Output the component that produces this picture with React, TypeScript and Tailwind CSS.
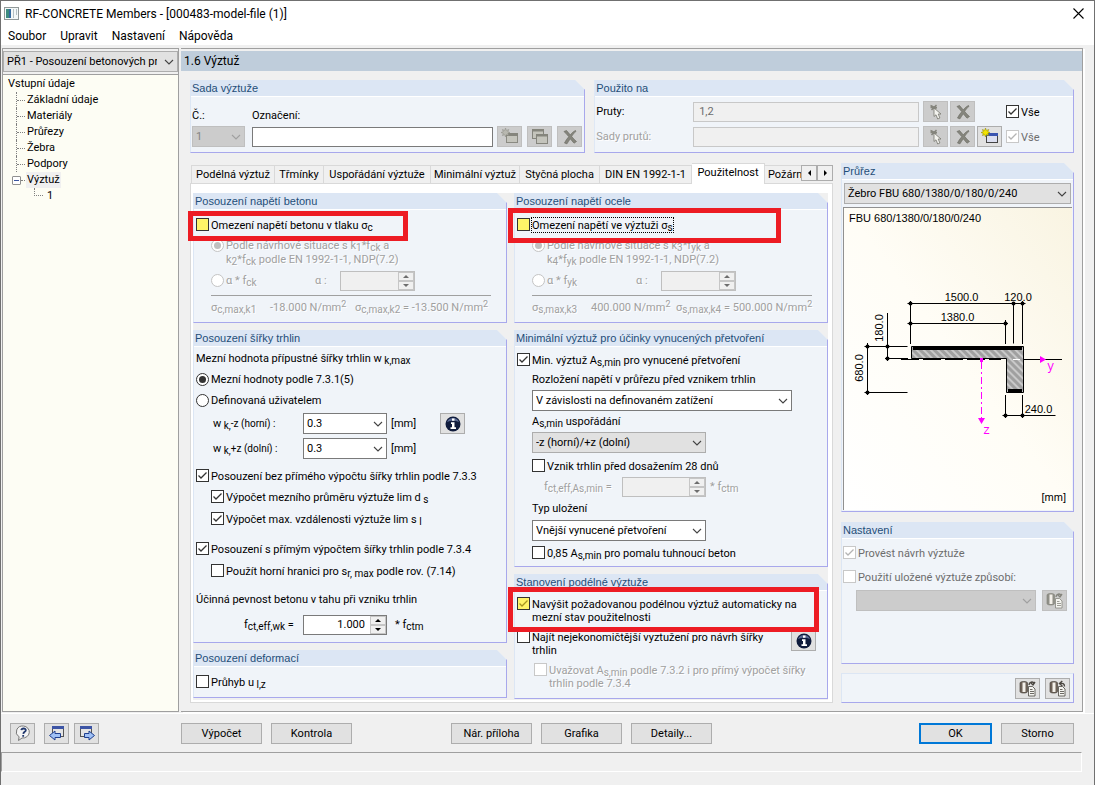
import { useId, type ReactNode } from 'react';
import clsx from 'clsx';

const treeItems = ['Základní údaje', 'Materiály', 'Průřezy', 'Žebra', 'Podpory'];

const tabs = [
  { label: 'Podélná výztuž', width: 'w-[84px]' },
  { label: 'Třmínky', width: 'w-[49px]' },
  { label: 'Uspořádání výztuže', width: 'w-[107px]' },
  { label: 'Minimální výztuž', width: 'w-[89px]' },
  { label: 'Styčná plocha', width: 'w-[80px]' },
  { label: 'DIN EN 1992-1-1', width: 'w-[92px]' },
  { label: 'Použitelnost', width: 'w-[73px]', active: true },
];

const DISABLED_TEXT = 'text-[#a0a0a0] [text-shadow:1px_1px_0_#fff]';

function Sub({ children }: { children: ReactNode }) {
  return <span className="relative top-[2px] text-[10px]">{children}</span>;
}

function Sup({ children }: { children: ReactNode }) {
  return <span className="relative -top-[4px] text-[9px]">{children}</span>;
}

interface GroupProps {
  title?: string;
  className?: string;
  bodyClass?: string;
  children?: ReactNode;
}

/* Group box with the cut top right corner */
function Group({ title, className, bodyClass, children }: GroupProps) {
  return (
    <section
      className={clsx(
        'flex flex-col border-r border-b border-l border-r-[#a8a8ec] border-b-[#a8a8ec] border-l-[#dce6f4] bg-[#f0f4f9]',
        title && '[clip-path:polygon(0_0,calc(100%-10px)_0,100%_10px,100%_100%,0_100%)]',
        !title && 'border-t border-t-[#dce6f4]',
        className,
      )}
    >
      {title && (
        <h2 className="h-[17px] border-b border-white bg-[#dce6f4] pl-px font-['Liberation_Sans',sans-serif] text-[11px] leading-4 whitespace-nowrap text-[#1f4e79]">
          {title}
        </h2>
      )}
      <div className={clsx('flex flex-1 flex-col', bodyClass)}>{children}</div>
    </section>
  );
}

interface CheckProps {
  children: ReactNode;
  checked?: boolean;
  disabled?: boolean;
  flat?: boolean;
  marked?: boolean;
  focused?: boolean;
  className?: string;
}

function Check({ children, checked, disabled, flat, marked, focused, className }: CheckProps) {
  return (
    <label className={clsx('flex items-start gap-0.5', className)}>
      <span className="relative h-[13px] w-[13px] shrink-0">
        <input
          type="checkbox"
          defaultChecked={checked}
          disabled={disabled}
          className={clsx(
            'peer block h-[13px] w-[13px] appearance-none border',
            disabled ? 'border-[#c8c8c8]' : 'border-[#333]',
            marked ? 'bg-[#fff468]' : 'bg-white',
          )}
        />
        <svg
          viewBox="0 0 13 13"
          className="pointer-events-none absolute inset-0 hidden h-[13px] w-[13px] peer-checked:block"
          fill="none"
          stroke={disabled ? '#b4b4b4' : marked ? '#a8961e' : '#333'}
          strokeWidth="1.3"
        >
          <path d="M2.5 6.5 5 9l5.5-5.5" />
        </svg>
      </span>
      <span
        className={clsx(
          'pt-px leading-[13px]',
          disabled && (flat ? 'text-[#6d6d6d]' : DISABLED_TEXT),
          focused && 'outline-1 outline-dotted outline-black',
        )}
      >
        {children}
      </span>
    </label>
  );
}

interface RadioProps {
  name: string;
  children: ReactNode;
  checked?: boolean;
  disabled?: boolean;
  className?: string;
}

function Radio({ name, children, checked, disabled, className }: RadioProps) {
  return (
    <label className={clsx('flex items-start gap-0.5', className)}>
      <span className="relative h-[13px] w-[13px] shrink-0">
        <input
          type="radio"
          name={name}
          defaultChecked={checked}
          disabled={disabled}
          className={clsx(
            'peer block h-[13px] w-[13px] appearance-none rounded-full border bg-white',
            disabled ? 'border-[#c4c4c4]' : 'border-[#333]',
          )}
        />
        <span
          className={clsx(
            'pointer-events-none absolute inset-[3px] hidden rounded-full peer-checked:block',
            disabled ? 'bg-[#c0c0c0]' : 'bg-[#333]',
          )}
        />
      </span>
      <span className={clsx('leading-[14px]', disabled && DISABLED_TEXT)}>{children}</span>
    </label>
  );
}

interface ComboProps {
  label: string;
  value: string;
  id?: string;
  grey?: boolean;
  disabled?: boolean;
  className?: string;
}

function Combo({ label, value, id, grey, disabled, className }: ComboProps) {
  return (
    <span className={clsx('relative block h-[21px] shrink-0', className)}>
      <select
        id={id}
        aria-label={label}
        disabled={disabled}
        className={clsx(
          'block h-[21px] w-full appearance-none border pt-px pr-5 pl-[3px]',
          disabled
            ? 'border-[#bfbfbf] bg-[#cccccc] text-[#838383] opacity-100'
            : grey
              ? 'border-[#adadad] bg-[#e1e1e1]'
              : 'border-[#7a7a7a] bg-white',
        )}
      >
        <option>{value}</option>
      </select>
      <svg
        viewBox="0 0 10 6"
        className="pointer-events-none absolute top-[8px] right-1 h-[6px] w-[10px]"
        fill="none"
        stroke={disabled ? '#a0a0a0' : '#444'}
        strokeWidth="1.1"
      >
        <path d="M1 1l4 4 4-4" />
      </svg>
    </span>
  );
}

interface SpinnerProps {
  label: string;
  value?: string;
  disabled?: boolean;
  className?: string;
}

function Spinner({ label, value, disabled, className }: SpinnerProps) {
  return (
    <span
      className={clsx(
        'flex h-5 shrink-0 border',
        disabled ? 'border-[#bfbfbf] bg-[#f0f0f0]' : 'border-[#7a7a7a] bg-white',
        className,
      )}
    >
      <input
        type="text"
        aria-label={label}
        defaultValue={value}
        disabled={disabled}
        className="w-0 flex-1 pr-[5px] text-right"
      />
      <span className="flex w-4 flex-col">
        {['M1 4 4 1l3 3z', 'M1 1l3 3 3-3z'].map((d, i) => (
          <button
            key={d}
            type="button"
            disabled={disabled}
            aria-label={i === 0 ? `${label} +` : `${label} -`}
            className="flex h-[9px] items-center justify-center border border-[#c6c6c6] bg-[#f0f0f0]"
          >
            <svg viewBox="0 0 8 5" className="h-[5px] w-2" fill={disabled ? '#6d6d6d' : '#000'}>
              <path d={d} />
            </svg>
          </button>
        ))}
      </span>
    </span>
  );
}

function IconButton({ label, disabled, children, className }: { label: string; disabled?: boolean; children: ReactNode; className?: string }) {
  return (
    <button
      type="button"
      aria-label={label}
      disabled={disabled}
      className={clsx(
        'flex h-[21px] w-[25px] shrink-0 items-center justify-center border',
        disabled ? 'border-[#bfbfbf] bg-[#cccccc]' : 'border-[#adadad] bg-[#e1e1e1]',
        className,
      )}
    >
      {children}
    </button>
  );
}

function TextButton({ children, primary }: { children: ReactNode; primary?: boolean }) {
  return (
    <button
      type="button"
      className={clsx(
        'h-[21px] bg-[#e1e1e1] pt-0.5 text-center',
        primary ? 'border-2 border-[#0078d7]' : 'border border-[#adadad]',
      )}
    >
      {children}
    </button>
  );
}

function NewIcon({ colored }: { colored?: boolean }) {
  return (
    <svg viewBox="0 0 18 17" className="h-[17px] w-[18px]">
      <rect x="5.5" y="5.5" width="11" height="9" fill={colored ? '#dcdff0' : '#c4c4bc'} stroke={colored ? '#444' : '#8a8a82'} />
      <path d="M5 5h12v3H5z" fill={colored ? '#3b55b0' : '#85857d'} />
      <path
        d="M4.500 0l.9 2.400L7.800 1.500 6.800 3.800 9 4.500 6.800 5.400 7.700 7.600 5.400 6.700 4.500 9 3.700 6.700 1.400 7.600 2.300 5.400 0 4.500 2.300 3.700 1.400 1.500 3.700 2.400z"
        fill={colored ? '#f2e400' : '#b8b8b0'}
        stroke={colored ? '#8a8000' : '#8a8a82'}
        strokeWidth=".5"
      />
    </svg>
  );
}

function CopyIcon() {
  return (
    <svg viewBox="0 0 18 17" className="h-[17px] w-[18px]" fill="#c4c4bc" stroke="#85857d">
      <rect x="1.500" y="1.500" width="11" height="9" />
      <path d="M1.500 2.500h11" strokeWidth="2" />
      <rect x="5.500" y="6.500" width="11" height="9" />
      <path d="M5.500 7.500h11" strokeWidth="2" />
    </svg>
  );
}

function CrossIcon() {
  return (
    <svg viewBox="0 0 16 16" className="h-4 w-4" fill="#85857d" stroke="#6e6e66" strokeWidth=".7">
      <path d="M2 2.500 4.500 1.500C6 3 7 4.500 8.300 6 9.500 4.300 11 2.700 13.500 1.500l.5.800C12 4 10.700 5.700 9.700 7.500c1.300 1.700 2.800 3.500 4.800 5l-2.500 1.700C10.700 12.800 9.500 11.300 8.300 9.800 7 11.500 6 13 5 14.800L2.500 14c1-2.300 2.500-4.300 4.300-6.300C5.300 6 3.800 4.200 2 2.500z" />
    </svg>
  );
}

function PickIcon() {
  return (
    <svg viewBox="0 0 16 16" className="h-4 w-4">
      <path d="M2.500 1.500l6 3M8.500 1l-5 5M2.500 3.500h6.500" stroke="#85857d" strokeWidth="1.500" />
      <path d="M6 4v8.500l2-1.700 1.700 4.200 2.200-1-1.700-4H13z" fill="#f3f3ef" stroke="#77776f" strokeWidth=".8" />
    </svg>
  );
}

function InfoIcon() {
  return (
    <svg viewBox="0 0 16 16" className="h-4 w-4">
      <circle cx="8" cy="8" r="7.500" fill="#0f1b3c" />
      <path d="M2 6a6.500 6.500 0 0 1 12 0c-4-2-8-2-12 0z" fill="#5a6a94" />
      <path d="M7 2.500h2.500v2.200H7zM6 6.200h3.500v5H11V13H5.500v-1.800H7V8H6z" fill="#fff" />
    </svg>
  );
}

function LibraryIcon({ disabled, load }: { disabled?: boolean; load?: boolean }) {
  const dark = disabled ? '#85857d' : '#4a4640';
  return (
    <svg viewBox="0 0 18 17" className="h-[17px] w-[18px]" fill="none">
      <path d="M1 3C1 1 8.500 1 8.500 3v8.500c0 2-7.500 2-7.500 0z" fill={disabled ? '#8f8f87' : '#6e6258'} stroke={dark} strokeWidth=".7" />
      <path d="M3.500 2.500h3v9.500h-3z" fill="#f3f0ea" />
      <path
        d={load ? 'M15.500 6.500C15.500 3.500 13.500 3 11 3.500M13.300 1l-2.800 2.500L13.300 6' : 'M10 5c0-3 4-4 5-1.500M11.500 2.500 14 5l2-3'}
        stroke={dark}
        strokeWidth="1.400"
      />
      <path d="M9.500 6.500h4l2.500 2.500v7H9.500z" fill="#f4f4f0" stroke={dark} strokeWidth=".8" />
      <path d="M11 9.500h2.500M11 11.500h4M11 13.500h4" stroke={dark} strokeWidth=".8" />
    </svg>
  );
}

function PageIcon({ next }: { next?: boolean }) {
  return (
    <svg viewBox="0 0 18 17" className="h-[17px] w-[18px]">
      <rect x={next ? 2.5 : 4.5} y="1.500" width="11" height="10" fill="#e4e4e4" stroke="#555" />
      <path d={next ? 'M2 1h12v3H2z' : 'M4 1h12v3H4z'} fill="#3d55a5" />
      <path
        d={next ? 'M6.500 8.500H11V6l5.500 4.500L11 15v-2.500H6.500z' : 'M12.500 8.500H7V6l-5.500 4.500L7 15v-2.500h5.500z'}
        fill="#9fc0f5"
        stroke="#1f3f8f"
      />
    </svg>
  );
}

function HelpIcon() {
  return (
    <svg viewBox="0 0 18 17" className="h-[17px] w-[18px]" fill="none">
      <path d="M9.500 1a6.500 6 0 1 1-1.500 12L4.500 15.500l.6-3.600A6.500 6 0 0 1 9.500 1z" fill="#f4f4f4" stroke="#777" />
      <path d="M7.300 5.200c.3-2.300 4.700-2.300 4.500 0C11.700 6.800 9.500 6.800 9.300 8.800M9.200 10v1.700" stroke="#22386e" strokeWidth="1.800" />
    </svg>
  );
}

/* Dimensioned cross-section of the rib */
function SectionDrawing() {
  const dots = [
    [67.5, 96.5], [170.5, 96.5], [179.5, 96.5], [67.5, 116.5], [162.5, 116.5],
    [24.5, 139.5], [44.5, 139.5], [44.5, 151.5], [24.5, 185.5], [162.5, 208.5], [179.5, 208.5],
  ];
  return (
    <svg viewBox="1 21 229 220" className="h-[220px] w-[229px]" fontFamily="Liberation Sans, sans-serif" fontSize="11">
      <defs>
        <pattern id="hatch" width="5" height="5" patternUnits="userSpaceOnUse" patternTransform="rotate(-45)">
          <rect width="5" height="5" fill="#a0a0a0" />
          <path d="M1 0v5" stroke="#e4e4e4" strokeWidth="1.200" />
        </pattern>
      </defs>
      <path d="M68.500 139.500h112v46h-17v-34h-95z" fill="url(#hatch)" stroke="#000" />
      <path d="M70 139h109v4H70zM165 182h14v3h-14z" />
      <g stroke="#000" fill="none">
        <path d="M64.500 96.500h118M67.500 94v43M170.500 96.500v40M179.500 94v43" />
        <path d="M64.500 116.500H165M162.500 113v24" />
        <path d="M21.500 139.500h43M42 151.500h23M44.500 106v48M24.500 136v52M21.500 185.500h43" />
        <path d="M159.500 208.500h53M162.500 188v23M179.500 188v23" />
        <path d="M58 152.500h100" strokeDasharray="18 4" />
        <path d="M181 152.500h38" />
        <path d="M170 152.500h7" stroke="#fff" />
      </g>
      {dots.map(([x, y]) => (
        <circle key={`${x}-${y}`} cx={x} cy={y} r="2" />
      ))}
      <g fill="#f0f" stroke="none" className="font-['Liberation_Mono',monospace] text-[12px]">
        <path d="M197 149v7l6-3.500zM135 211h7l-3.500 6zM137 151h3v4h-3z" />
        <path d="M138.500 155v56" stroke="#f0f" strokeDasharray="7 3 2 3" />
        <text x="204" y="163">y</text>
        <text x="140" y="227">z</text>
      </g>
      <g textAnchor="middle">
        <text x="118.500" y="94">1500.0</text>
        <text x="175" y="94">120.0</text>
        <text x="114.500" y="114">1380.0</text>
        <text x="195.500" y="206">240.0</text>
        <text transform="translate(40 121) rotate(-90)">180.0</text>
        <text transform="translate(20 161) rotate(-90)">680.0</text>
      </g>
    </svg>
  );
}

function Marker({ className }: { className: string }) {
  return <div className={clsx('pointer-events-none absolute z-10 border-[5px] border-[#ed1c24]', className)} />;
}

interface StressGroupProps {
  title: string;
  check: ReactNode;
  strength: string;
  factors: [string, string];
  symbol: string;
  values: [string, string];
}

function StressGroup({ title, check, strength, factors, symbol, values }: StressGroupProps) {
  const name = useId();
  return (
    <Group title={title} className="h-[130px]" bodyClass="pl-[2px]">
      <div className="flex h-[29px] items-center">{check}</div>
      <Radio name={name} checked disabled className="ml-[15px] h-7">
        Podle návrhové situace s k<Sub>{factors[0]}</Sub>*f<Sub>{strength}</Sub> a
        <br />k<Sub>{factors[1]}</Sub>*f<Sub>{strength}</Sub> podle EN 1992-1-1, NDP(7.2)
      </Radio>
      <div className="ml-[15px] flex h-7 items-center">
        <Radio name={name} disabled className="w-[104px]">
          α * f<Sub>{strength}</Sub>
        </Radio>
        <span className={clsx('w-[25px]', DISABLED_TEXT)}>α :</span>
        <Spinner label={`α ${title}`} disabled className="w-[75px]" />
      </div>
      <hr className="mr-[15px] ml-[15px] border-[#a0a0a0]" />
      <div className={clsx('mt-0.5 ml-[15px] flex h-5 items-center whitespace-nowrap', DISABLED_TEXT)}>
        <span className="w-[59px]">
          σ<Sub>{symbol},max,k{factors[0]}</Sub>
        </span>
        <span className="w-[85px]">
          {values[0]} N/mm<Sup>2</Sup>
        </span>
        <span>
          σ<Sub>{symbol},max,k{factors[1]}</Sub> = {values[1]} N/mm<Sup>2</Sup>
        </span>
      </div>
    </Group>
  );
}

function CrackGroup() {
  return (
    <Group title="Posouzení šířky trhlin" className="h-[313px]" bodyClass="pl-[2px]">
      <p className="flex h-[23px] items-center pt-px">
        <span>
          Mezní hodnota přípustné šířky trhlin w<Sub> k,max</Sub>
        </span>
      </p>
      <Radio name="limit" checked className="h-[21px] pt-[3px]">
        Mezní hodnoty podle 7.3.1(5)
      </Radio>
      <Radio name="limit" className="h-5 pt-[3px]">
        Definovaná uživatelem
      </Radio>
      {['-z (horní)', '+z (dolní)'].map((side, i) => (
        <div key={side} className="flex h-[25px] items-center pl-[17px]">
          <span className="w-[90px]">
            w<Sub> k,</Sub>
            <span className="text-[10px]">{side} :</span>
          </span>
          <Combo label={`w k,${side}`} value="0.3" className="w-[84px]" />
          <span className="w-[53px] pl-1">[mm]</span>
          {i === 0 && (
            <IconButton label="Informace">
              <InfoIcon />
            </IconButton>
          )}
        </div>
      ))}
      <Check checked className="mt-1 h-[22px] pt-1">
        Posouzení bez přímého výpočtu šířky trhlin podle 7.3.3
      </Check>
      <Check checked className="ml-[15px] h-[21px] pt-[3px]">
        Výpočet mezního průměru výztuže lim d<Sub> s</Sub>
      </Check>
      <Check checked className="ml-[15px] h-[22px] pt-1">
        Výpočet max. vzdálenosti výztuže lim s<Sub> l</Sub>
      </Check>
      <Check checked className="mt-2 h-[22px] pt-1">
        Posouzení s přímým výpočtem šířky trhlin podle 7.3.4
      </Check>
      <Check className="ml-[15px] h-6 pt-1">
        Použít horní hranici pro s<Sub>r, max</Sub> podle rov. (7.14)
      </Check>
      <p className="h-[31px] leading-8">Účinná pevnost betonu v tahu při vzniku trhlin</p>
      <div className="flex items-center">
        <span className="w-[107px] pl-12">
          f<Sub>ct,eff,wk</Sub> =
        </span>
        <Spinner label="fct,eff,wk" value="1.000" className="w-[84px]" />
        <span className="pl-2">
          * f<Sub>ctm</Sub>
        </span>
      </div>
    </Group>
  );
}

function MinReinforcementGroup() {
  return (
    <Group title="Minimální výztuž pro účinky vynucených přetvoření" className="h-[237px]" bodyClass="pl-[2px]">
      <Check checked className="h-[25px] pt-[6px]">
        Min. výztuž A<Sub>s,min</Sub> pro vynucené přetvoření
      </Check>
      <div className="flex flex-col items-start pl-[15px]">
        <label htmlFor="stress" className="mb-[3px] leading-[15px]">
          Rozložení napětí v průřezu před vznikem trhlin
        </label>
        <Combo id="stress" label="Rozložení napětí" value="V závislosti na definovaném zatížení" className="w-[260px]" />
        <label htmlFor="layout" className="leading-[21px]">
          A<Sub>s,min</Sub> uspořádání
        </label>
        <Combo id="layout" label="As,min uspořádání" value="-z (horní)/+z (dolní)" grey className="w-[174px]" />
        <Check className="h-6 pt-1.5">Vznik trhlin před dosažením 28 dnů</Check>
        <div className="flex items-center">
          <span className={clsx('w-[90px] pl-3', DISABLED_TEXT)}>
            f<Sub>ct,eff,As,min</Sub> =
          </span>
          <Spinner label="fct,eff,As,min" disabled className="w-[84px]" />
          <span className={clsx('pl-1', DISABLED_TEXT)}>
            * f<Sub>ctm</Sub>
          </span>
        </div>
        <label htmlFor="support" className="leading-[23px]">
          Typ uložení
        </label>
        <Combo id="support" label="Typ uložení" value="Vnější vynucené přetvoření" className="w-[174px]" />
        <Check className="pt-[5px]">
          0,85 A<Sub>s,min</Sub> pro pomalu tuhnoucí beton
        </Check>
      </div>
    </Group>
  );
}

function LongitudinalGroup() {
  return (
    <Group title="Stanovení podélné výztuže" className="h-[125px]" bodyClass="gap-[6px] pt-[6px] pl-[2px]">
      <Check checked marked>
        Navýšit požadovanou podélnou výztuž automaticky na
        <br />
        mezní stav použitelnosti
      </Check>
      <div className="flex h-[27px] justify-between pr-[11px]">
        <Check>
          Najít nejekonomičtější vyztužení pro návrh šířky
          <br />
          trhlin
        </Check>
        <IconButton label="Informace o vyztužení">
          <InfoIcon />
        </IconButton>
      </div>
      <Check disabled className="ml-[17px]">
        Uvažovat A<Sub>s,min</Sub> podle 7.3.2 i pro přímý výpočet šířky
        <br />
        trhlin podle 7.3.4
      </Check>
    </Group>
  );
}

function Sidebar() {
  return (
    <aside className="flex w-[177px] shrink-0 flex-col border border-[#9f9f9f] bg-[#f0f0f0] pt-[2px]">
      <Combo label="Případ" value="PŘ1 - Posouzení betonových prutů" grey className="w-full" />
      <nav className="mt-0.5 flex-1 border-t border-[#9f9f9f] bg-[#fdfdf4] pt-px pl-[5px] leading-4">
        <a href="#vstup" className="block">Vstupní údaje</a>
        <ul className="pl-2">
          {treeItems.map((item) => (
            <li key={item} className="flex items-center border-l border-dotted border-[#808080]">
              <span className="mr-[2px] w-2 border-t border-dotted border-[#808080]" />
              <a href="#item">{item}</a>
            </li>
          ))}
          <li>
            <div className="-ml-[4px] flex items-center">
              <button
                type="button"
                aria-label="Sbalit"
                className="flex h-[9px] w-[9px] items-center justify-center rounded-[1px] border border-[#919191] bg-white"
              >
                <span className="h-px w-[5px] bg-[#3b55a0]" />
              </button>
              <span className="mr-px w-1 border-t border-dotted border-[#808080]" />
              <a href="#vyztuz" className="bg-[#f0f0f0] px-px">Výztuž</a>
            </div>
            <div className="ml-[18px] flex h-4 items-start">
              <span className="mr-1 h-2 w-[9px] border-b border-l border-dotted border-[#808080]" />
              <a href="#vyztuz-1">1</a>
            </div>
          </li>
        </ul>
      </nav>
    </aside>
  );
}

function TopGroups() {
  return (
    <div className="flex gap-[9px]">
      <Group title="Sada výztuže" className="h-[73px] min-w-0 flex-[395]" bodyClass="pr-[2px] pl-px">
        <div className="flex h-[29px] items-center pt-2">
          <label htmlFor="set-no" className="w-[60px]">Č.:</label>
          <label htmlFor="set-name">Označení:</label>
        </div>
        <div className="flex items-center gap-[5px]">
          <Combo id="set-no" label="Č." value="1" disabled className="w-[53px]" />
          <input id="set-name" type="text" className="ml-0.5 h-5 min-w-0 flex-1 border border-[#7a7a7a] bg-white px-1" />
          <IconButton label="Nová sada" disabled className="-ml-px">
            <NewIcon />
          </IconButton>
          <IconButton label="Kopírovat sadu" disabled>
            <CopyIcon />
          </IconButton>
          <IconButton label="Smazat sadu" disabled>
            <CrossIcon />
          </IconButton>
        </div>
      </Group>
      <Group title="Použito na" className="h-[73px] min-w-0 flex-[480]" bodyClass="gap-1 pt-1 pl-px">
        {['Pruty:', 'Sady prutů:'].map((label, i) => (
          <div key={label} className="flex h-[21px] items-center">
            <label htmlFor={`members-${i}`} className={clsx('w-[97px]', i === 1 && DISABLED_TEXT)}>
              {label}
            </label>
            <input
              id={`members-${i}`}
              type="text"
              disabled
              defaultValue={i === 0 ? '1,2' : ''}
              className="mr-1 h-5 min-w-0 flex-1 border border-[#c8c8c8] bg-[#f0f0f0] px-[5px] text-[#6d6d6d]"
            />
            <div className="flex w-[83px] gap-0.5">
              <IconButton label={`Vybrat ${label}`} disabled>
                <PickIcon />
              </IconButton>
              <IconButton label={`Smazat ${label}`} disabled>
                <CrossIcon />
              </IconButton>
              {i === 1 && (
                <IconButton label="Nová sada prutů">
                  <NewIcon colored />
                </IconButton>
              )}
            </div>
            <Check checked disabled={i === 1} flat className="w-[67px]">
              Vše
            </Check>
          </div>
        ))}
      </Group>
    </div>
  );
}

function TabBar() {
  return (
    <div role="tablist" className="relative z-[1] -mb-px flex h-[21px] items-end">
      {tabs.map((tab) => (
        <button
          key={tab.label}
          type="button"
          role="tab"
          aria-selected={!!tab.active}
          className={clsx(
            'shrink-0 border-t border-r border-[#d9d9d9] text-center whitespace-nowrap first:ml-px first:border-l',
            tab.active ? 'h-[21px] bg-white pb-0.5' : 'h-[19px] border-b bg-[#f0f0f0] pt-px',
            tab.width,
          )}
        >
          {tab.label}
        </button>
      ))}
      <button type="button" role="tab" aria-selected={false} className="h-[19px] min-w-0 flex-1 border-t border-b border-[#d9d9d9] pt-px pl-[3px] text-left whitespace-nowrap">
        Požárn
      </button>
      {['M5 0v6L2 3z', 'M2 0v6l3-3z'].map((d, i) => (
        <button
          key={d}
          type="button"
          aria-label={i === 0 ? 'Předchozí karty' : 'Další karty'}
          className="mb-[3px] flex h-4 w-4 shrink-0 items-center justify-center border border-[#adadad] bg-[#f0f0f0]"
        >
          <svg viewBox="0 0 7 6" className="h-[6px] w-[7px]">
            <path d={d} />
          </svg>
        </button>
      ))}
    </div>
  );
}

function ServiceabilityPanel() {
  return (
    <div className="flex-1 border border-[#d9d9d9] bg-white pt-[9px] pr-1 pb-[2px] pl-[2px]">
      <div className="flex gap-[7px] bg-[#f0f0f0] pb-px">
        <div className="flex min-w-0 flex-1 flex-col gap-[7px]">
          <div className="relative">
            <StressGroup
              title="Posouzení napětí betonu"
              check={<Check marked>Omezení napětí betonu v tlaku σ<Sub>c</Sub></Check>}
              strength="ck"
              factors={['1', '2']}
              symbol="c"
              values={['-18.000', '-13.500']}
            />
            <Marker className="top-[18px] -left-[5px] h-[30px] w-[220px]" />
          </div>
          <CrackGroup />
          <Group title="Posouzení deformací" className="h-12" bodyClass="justify-center pl-[2px]">
            <Check>
              Průhyb u<Sub> l,z</Sub>
            </Check>
          </Group>
        </div>
        <div className="flex min-w-0 flex-1 flex-col gap-[7px]">
          <div className="relative">
            <StressGroup
              title="Posouzení napětí ocele"
              check={<Check marked focused>Omezení napětí ve výztuži σ<Sub>s</Sub></Check>}
              strength="yk"
              factors={['3', '4']}
              symbol="s"
              values={['400.000', '500.000']}
            />
            <Marker className="top-[15px] -left-[6px] h-[35px] w-[273px]" />
          </div>
          <MinReinforcementGroup />
          <div className="relative">
            <LongitudinalGroup />
            <Marker className="top-[13px] -left-[6px] h-[45px] w-[311px]" />
          </div>
        </div>
      </div>
    </div>
  );
}

function SectionColumn() {
  return (
    <div className="flex w-[233px] shrink-0 flex-col">
      <Group title="Průřez" className="flex-1" bodyClass="px-px pt-[3px] pb-px">
        <Combo label="Průřez" value="Žebro FBU 680/1380/0/180/0/240" grey className="mx-px" />
        <div className="mt-[3px] flex flex-1 flex-col border-t border-l border-[#909090] bg-linear-to-tr from-white via-[#fffdf6] to-[#f9f4e2] font-['Liberation_Sans',sans-serif]">
          <p className="pl-[5px] leading-5">FBU 680/1380/0/180/0/240</p>
          <SectionDrawing />
          <p className="mt-auto mr-[6px] mb-1.5 text-right">[mm]</p>
        </div>
      </Group>
      <Group title="Nastavení" className="mt-[10px] h-[142px]" bodyClass="pl-px">
        <Check checked disabled flat className="mt-[7px]">
          Provést návrh výztuže
        </Check>
        <Check disabled flat className="mt-[10px]">
          Použití uložené výztuže způsobí:
        </Check>
        <div className="mt-[6px] flex gap-[6px] pr-[6px] pl-[13px]">
          <Combo label="Uložená výztuž" value="" disabled className="flex-1" />
          <IconButton label="Knihovna" disabled>
            <LibraryIcon disabled />
          </IconButton>
        </div>
      </Group>
      <Group className="mt-[9px] h-[30px]" bodyClass="items-end justify-center pr-[3px]">
        <div className="flex gap-[5px]">
          <IconButton label="Uložit do knihovny">
            <LibraryIcon />
          </IconButton>
          <IconButton label="Načíst z knihovny">
            <LibraryIcon load />
          </IconButton>
        </div>
      </Group>
    </div>
  );
}

export default function App() {
  return (
    <div className="flex min-h-screen flex-col border border-[#707070] bg-[#f0f0f0] font-['Roboto','DejaVu_Sans',sans-serif] text-[11px] leading-[14px] text-black">
      <header className="bg-white text-[12px]">
        <div className="flex h-[25px] items-center">
          <svg viewBox="0 0 15 13" className="ml-[3px] h-[13px] w-[15px]">
            <rect x=".5" y=".5" width="14" height="12" fill="#f4f8f8" stroke="#909898" />
            <path d="M2 2h5v9H2z" fill="#3d8c80" />
            <path d="M5 2h2v9H5z" fill="#356aa0" />
            <path d="M9 2h1v9H9zM12 2h1v6h-1z" fill="#b4c0c4" />
          </svg>
          <h1 className="ml-[6px]">RF-CONCRETE Members - [000483-model-file (1)]</h1>
          <button type="button" aria-label="Zavřít" className="mr-[10px] ml-auto">
            <svg viewBox="0 0 11 11" className="h-[11px] w-[11px]" stroke="#000" strokeWidth="1.100">
              <path d="M.5.500l10 10M10.500.500l-10 10" />
            </svg>
          </button>
        </div>
        <nav className="flex h-[19px] items-center gap-[14px] pl-[7px]">
          <a href="#soubor">Soubor</a>
          <a href="#upravit">Upravit</a>
          <a href="#nastaveni">Nastavení</a>
          <a href="#napoveda">Nápověda</a>
        </nav>
      </header>

      <div className="mt-[3px] flex flex-1 gap-[2px] pl-px">
        <Sidebar />
        <main className="mr-[11px] flex min-w-0 flex-1 flex-col border-t border-r border-b border-[#9f9f9f] pt-[2px] pb-2 shadow-[2px_1px_0_#fff]">
          <h2 className="h-5 bg-[#bfcddb] pl-[3px] text-[12px] leading-5">1.6 Výztuž</h2>
          <div className="mt-[9px] mr-2 ml-[9px] flex flex-1 flex-col gap-[10px]">
            <TopGroups />
            <div className="flex flex-1 gap-2">
              <div className="flex min-w-0 flex-1 flex-col">
                <TabBar />
                <ServiceabilityPanel />
              </div>
              <SectionColumn />
            </div>
          </div>
        </main>
      </div>

      <footer>
        <div className="mt-px flex h-[39px] items-center border-t border-white pr-5 pl-[9px]">
          <div className="flex w-[171px] shrink-0">
            <IconButton label="Nápověda">
              <HelpIcon />
            </IconButton>
            <IconButton label="Předchozí" className="ml-[9px]">
              <PageIcon />
            </IconButton>
            <IconButton label="Další" className="ml-[5px]">
              <PageIcon next />
            </IconButton>
          </div>
          <div className="grid grid-cols-[81px_81px] gap-[9px]">
            <TextButton>Výpočet</TextButton>
            <TextButton>Kontrola</TextButton>
          </div>
          <div className="ml-[99px] grid grid-cols-[81px_81px_81px] gap-[9px]">
            <TextButton>Nár. příloha</TextButton>
            <TextButton>Grafika</TextButton>
            <TextButton>Detaily...</TextButton>
          </div>
          <div className="ml-auto grid grid-cols-[73px_73px] gap-[9px]">
            <TextButton primary>OK</TextButton>
            <TextButton>Storno</TextButton>
          </div>
        </div>
        <div className="mr-3 mb-[13px] h-5 border-t border-r border-b border-l border-t-[#9f9f9f] border-r-white border-b-white border-l-[#9f9f9f]" />
      </footer>
    </div>
  );
}
